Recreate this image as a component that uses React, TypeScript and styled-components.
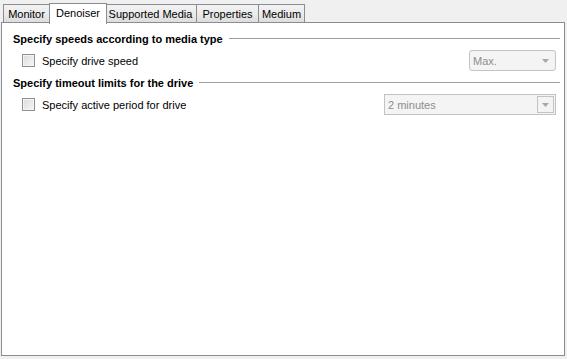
import React from "react";
import styled, { createGlobalStyle } from "styled-components";

const GlobalStyle = createGlobalStyle`
  html, body {
    margin: 0;
    padding: 0;
    background: #f0f0f0;
  }
  body {
    font-family: Tahoma, "Liberation Sans", Arial, sans-serif;
    font-size: 11px;
    color: #000;
  }
`;

type TabInfo = { label: string; width: number };

const tabs: TabInfo[] = [
  { label: "Monitor", width: 47 },
  { label: "Denoiser", width: 58 },
  { label: "Supported Media", width: 93 },
  { label: "Properties", width: 63 },
  { label: "Medium", width: 47 },
];
const ACTIVE = 1;

const Window = styled.div`
  width: 567px;
  height: 359px;
  box-sizing: border-box;
  padding: 2px 2px 3px 1px;
  display: flex;
  flex-direction: column;
`;

const TabStrip = styled.div`
  display: flex;
  align-items: flex-end;
  height: 21px;
  padding-left: 2px;
  position: relative;
  z-index: 1;
`;

const Tab = styled.div<{ $active: boolean; $width: number }>`
  box-sizing: border-box;
  width: ${p => p.$width}px;
  height: ${p => (p.$active ? "21px" : "19px")};
  padding-top: 2px;
  text-align: center;
  margin-right: ${p => (p.$active ? "-2px" : "0")};
  margin-bottom: ${p => (p.$active ? "-1px" : "0")};
  margin-left: -1px;
  border: 1px solid #898c95;
  border-bottom: ${p => (p.$active ? "none" : "1px solid #898c95")};
  background: ${p =>
    p.$active ? "#fff" : "linear-gradient(#f2f2f2, #ebebeb 50%, #dddddd)"};
  position: relative;
  z-index: ${p => (p.$active ? 2 : 1)};
  line-height: 15px;
  white-space: nowrap;
  &:first-child {
    margin-left: 0;
  }
`;

const Panel = styled.div`
  flex: 1;
  background: #fff;
  border: 1px solid #898c95;
  margin-top: -1px;
  padding: 9px 4px 0 11px;
  box-sizing: border-box;
`;

const Group = styled.div`
  display: flex;
  flex-direction: column;
`;

const GroupHeader = styled.div`
  display: flex;
  align-items: center;
  gap: 6px;
  height: 13px;
  font-weight: bold;
  white-space: nowrap;
`;

const Rule = styled.div`
  flex: 1;
  height: 1px;
  background: #a0a0a0;
`;

const OptionRow = styled.div`
  display: flex;
  align-items: center;
  height: 21px;
  margin: 5px 0 5px;
  padding-left: 9px;
`;

const Checkbox = styled.span`
  box-sizing: border-box;
  width: 13px;
  height: 13px;
  border: 1px solid #8e8f8f;
  background: linear-gradient(135deg, #dcdcdc, #f6f6f6);
  box-shadow: inset 0 0 0 1px #f4f4f4;
`;

const Label = styled.span`
  margin-left: 7px;
  flex: 1;
`;

const Combo = styled.div<{ $width: number; $button?: boolean }>`
  box-sizing: border-box;
  width: ${p => p.$width}px;
  height: 21px;
  border: 1px solid #c3c3c3;
  border-radius: ${p => (p.$button ? "0" : "3px")};
  background: #f4f4f4;
  display: flex;
  align-items: center;
  color: #8d8d8d;
  padding: 0 1px 0 3px;
  margin-right: 4px;
`;

const ComboText = styled.span`
  flex: 1;
`;

const ArrowBox = styled.span<{ $boxed?: boolean }>`
  box-sizing: border-box;
  width: 17px;
  height: 17px;
  display: flex;
  align-items: center;
  justify-content: center;
  border: ${p => (p.$boxed ? "1px solid #c3c3c3" : "1px solid transparent")};
`;

const Arrow = () => (
  <svg width="7" height="4" viewBox="0 0 7 4">
    <path d="M0 0h7L3.5 4z" fill="#a8a8a8" />
  </svg>
);

export default function App() {
  return (
    <>
      <GlobalStyle />
      <Window>
        <TabStrip>
          {tabs.map((t, i) => (
            <Tab key={t.label} $active={i === ACTIVE} $width={t.width}>
              {t.label}
            </Tab>
          ))}
        </TabStrip>
        <Panel>
          <Group>
            <GroupHeader>
              Specify speeds according to media type
              <Rule />
            </GroupHeader>
            <OptionRow>
              <Checkbox />
              <Label>Specify drive speed</Label>
              <Combo $width={87}>
                <ComboText>Max.</ComboText>
                <ArrowBox>
                  <Arrow />
                </ArrowBox>
              </Combo>
            </OptionRow>
          </Group>
          <Group>
            <GroupHeader>
              Specify timeout limits for the drive
              <Rule />
            </GroupHeader>
            <OptionRow>
              <Checkbox />
              <Label>Specify active period for drive</Label>
              <Combo $width={172} $button>
                <ComboText>2 minutes</ComboText>
                <ArrowBox $boxed>
                  <Arrow />
                </ArrowBox>
              </Combo>
            </OptionRow>
          </Group>
        </Panel>
      </Window>
    </>
  );
}
